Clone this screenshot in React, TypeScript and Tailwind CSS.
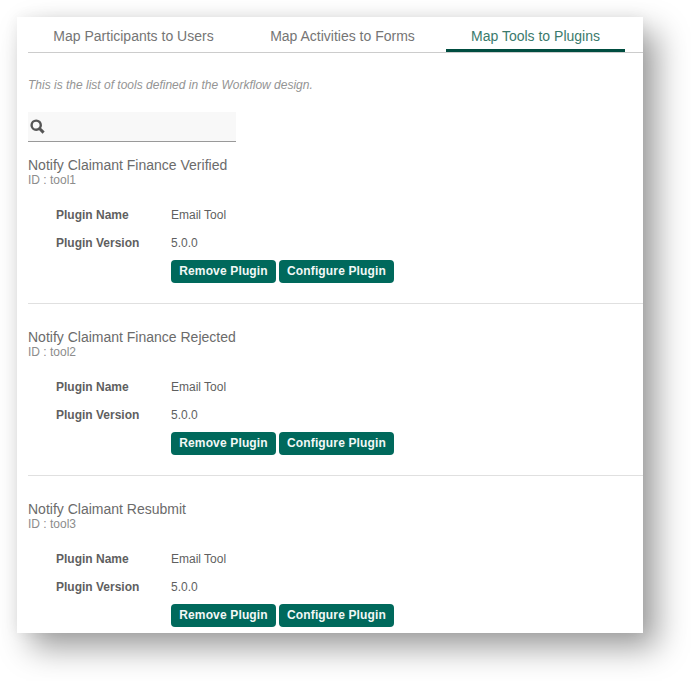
import React from 'react';

const tools = [
  { name: 'Notify Claimant Finance Verified', id: 'tool1' },
  { name: 'Notify Claimant Finance Rejected', id: 'tool2' },
  { name: 'Notify Claimant Resubmit', id: 'tool3' },
];

const SearchIcon: React.FC = () => (
  <svg width="15" height="15" viewBox="0 0 15 15" fill="none" stroke="#555555">
    <circle cx="6.2" cy="6.2" r="4.6" strokeWidth="2.4" />
    <path d="M9.5 9.5L13.6 13.6" strokeWidth="3" />
  </svg>
);

const ToolRow: React.FC<{ name: string; id: string; last: boolean }> = ({ name, id, last }) => (
  <div className={last ? 'h-[147px]' : 'mb-[25px] h-[147px] border-b border-[#e0e0e0]'}>
    <div className="text-[14px] leading-[16px] text-[#6b6b6b]">{name}</div>
    <div className="mt-[1px] text-[12px] leading-[13px] text-[#8c8c8c]">ID : {id}</div>
    <div className="mt-[14px] flex h-[28px] items-center pl-[28px] text-[12px] text-[#5f5f5f]">
      <span className="w-[115px] font-bold">Plugin Name</span>
      <span>Email Tool</span>
    </div>
    <div className="flex h-[28px] items-center pl-[28px] text-[12px] text-[#5f5f5f]">
      <span className="w-[115px] font-bold">Plugin Version</span>
      <span>5.0.0</span>
    </div>
    <div className="mt-[3px] flex gap-[3px] pl-[143px]">
      <button className="h-[23px] w-[105px] rounded-[4px] bg-[#00695c] pb-[2px] text-[12px] font-bold tracking-[0.15px] text-[#f2f8f6]">Remove Plugin</button>
      <button className="h-[23px] w-[115px] rounded-[4px] bg-[#00695c] pb-[2px] text-[12px] font-bold tracking-[0.15px] text-[#f2f8f6]">Configure Plugin</button>
    </div>
  </div>
);

export default function App() {
  return (
    <div className="h-[681px] w-[691px] overflow-hidden bg-white p-[17px] font-['Liberation_Sans',Arial,sans-serif]">
      <div className="h-[616px] w-[626px] overflow-hidden bg-white shadow-[14px_15px_30px_rgba(0,0,0,0.38),0_0_14px_rgba(0,0,0,0.06)]">
        <div className="ml-[11px]">
          {/* Tabs */}
          <div className="flex h-[36px] gap-[6px] border-b border-[#cccccc] text-[14px]">
            <div className="w-[211px] pt-[11px] text-center leading-[16px] text-[#757575]">Map Participants to Users</div>
            <div className="w-[195px] pt-[11px] text-center leading-[16px] text-[#757575]">Map Activities to Forms</div>
            <div className="h-[35px] w-[179px] border-b-[3px] border-[#004d40] pt-[11px] text-center leading-[16px] text-[#3a7a6c]">Map Tools to Plugins</div>
          </div>

          <p className="mt-[25px] text-[12px] leading-[14px] text-[#949494] italic">This is the list of tools defined in the Workflow design.</p>

          <div className="mt-[20px] flex h-[30px] w-[208px] items-center border-b border-[#999999] bg-[#f8f8f8] pl-[2px]">
            <SearchIcon />
          </div>

          <div className="mt-[15px]">
            {tools.map((tool, i) => (
              <ToolRow key={tool.id} name={tool.name} id={tool.id} last={i === tools.length - 1} />
            ))}
          </div>
        </div>
      </div>
    </div>
  );
}
